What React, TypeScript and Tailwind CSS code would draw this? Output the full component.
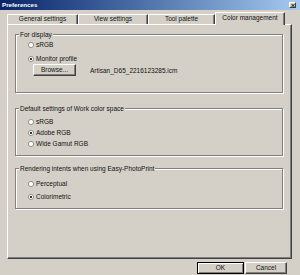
import React from "react";

function Radio({ checked }: { checked?: boolean }) {
  return (
    <svg width="6" height="6" viewBox="0 0 6 6" className="shrink-0">
      <circle cx="3" cy="3" r="2.6" fill="#ffffff" stroke="#7a7a7a" strokeWidth="0.8" />
      {checked && <circle cx="3" cy="3" r="1.1" fill="#000000" />}
    </svg>
  );
}

function RadioRow({ label, checked, className = "" }: { label: string; checked?: boolean; className?: string }) {
  return (
    <div className={`h-[8px] flex items-center gap-[2px] pl-[12px] ${className}`}>
      <Radio checked={checked} />
      <span>{label}</span>
    </div>
  );
}

function Group({ title, className = "", children }: { title: string; className?: string; children: React.ReactNode }) {
  return (
    <div
      className={`relative border border-[#808080] shadow-[inset_1px_1px_0_#ffffff,1px_1px_0_#ffffff] flex flex-col ${className}`}
    >
      <span className="absolute left-[3px] top-[-4px] bg-[#d4d0c8] px-[1px] leading-[7px]">{title}</span>
      {children}
    </div>
  );
}

function Tab({ label, w, selected }: { label: string; w: string; selected?: boolean }) {
  return (
    <div
      className={`${w} flex items-center justify-center bg-[#d4d0c8] border-l border-t border-white border-r border-r-[#404040] shadow-[inset_-1px_0_0_#808080] ${
        selected ? "h-[13px] -mb-[1px] pb-[2px]" : "h-[10px]"
      }`}
    >
      <span>{label}</span>
    </div>
  );
}

function Btn({ children, w, def }: { children: React.ReactNode; w: string; def?: boolean }) {
  return (
    <div
      className={`${w} h-[12px] flex items-center justify-center bg-[#d4d0c8] ${
        def
          ? "border border-[#000000] shadow-[inset_1px_1px_0_#ffffff,inset_-1px_-1px_0_#808080]"
          : "border border-t-white border-l-white border-r-[#404040] border-b-[#404040] shadow-[inset_-1px_-1px_0_#808080]"
      }`}
    >
      {children}
    </div>
  );
}

export default function App() {
  return (
    <div className="w-[300px] h-[275px] bg-[#d4d0c8] flex flex-col overflow-hidden text-[6.5px] leading-none text-[#111111] font-['Liberation_Sans',Arial,sans-serif]">
      {/* Title bar */}
      <div className="h-[10px] flex items-center justify-between bg-gradient-to-r from-[#0a246a] to-[#a6caf0] pl-[2px] pr-[4px]">
        <span className="text-white font-bold text-[6.2px]">Preferences</span>
        <div className="w-[7px] h-[6px] bg-[#d4d0c8] border-t border-l border-white border-r border-b border-r-[#404040] border-b-[#404040] flex items-center justify-center">
          <svg width="4" height="3" viewBox="0 0 4 3">
            <path d="M0.5 0 L3.5 3 M3.5 0 L0.5 3" stroke="#000" strokeWidth="0.9" />
          </svg>
        </div>
      </div>

      {/* Tabs */}
      <div className="h-[12px] mt-[2px] pl-[7px] flex items-end relative z-10">
        <Tab label="General settings" w="w-[71px]" />
        <Tab label="View settings" w="w-[70px]" />
        <Tab label="Tool palette" w="w-[67px]" />
        <Tab label="Color management" w="w-[70px]" selected />
      </div>

      {/* Panel */}
      <div className="ml-[7px] mr-[8px] h-[235px] border-l border-t border-white border-r border-b border-r-[#404040] border-b-[#404040] shadow-[inset_-1px_-1px_0_#808080] pl-[7px] pr-[8px] flex flex-col">
        <Group title="For display" className="mt-[9px] h-[59px] pt-[6px]">
          <RadioRow label="sRGB" />
          <RadioRow label="Monitor profile" checked className="mt-[6px]" />
          <div className="mt-[1px] h-[12px] flex items-center pl-[17px]">
            <Btn w="w-[43px]">Browse...</Btn>
            <span className="ml-[14px] mt-[2px]">Artisan_D65_2216123285.icm</span>
          </div>
        </Group>

        <Group title="Default settings of Work color space" className="mt-[15px] h-[48px] pt-[9px]">
          <RadioRow label="sRGB" />
          <RadioRow label="Adobe RGB" checked className="mt-[3px]" />
          <RadioRow label="Wide Gamut RGB" className="mt-[3px]" />
        </Group>

        <Group title="Rendering intents when using Easy-PhotoPrint" className="mt-[12px] h-[41px] pt-[11px]">
          <RadioRow label="Perceptual" />
          <RadioRow label="Colorimetric" checked className="mt-[5px]" />
        </Group>
      </div>

      {/* Footer buttons */}
      <div className="mt-[3px] flex justify-end gap-[1px] pr-[13px]">
        <Btn w="w-[47px]" def>
          OK
        </Btn>
        <Btn w="w-[42px]">Cancel</Btn>
      </div>
    </div>
  );
}
